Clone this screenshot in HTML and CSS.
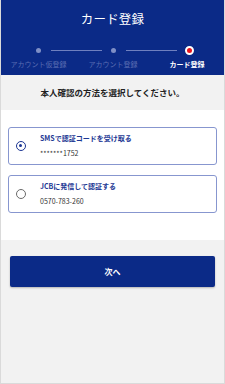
FILE: index.html
```html
<!DOCTYPE html>
<html lang="ja">
<head>
<meta charset="utf-8">
<title>カード登録</title>
<link rel="stylesheet" href="styles.css">
</head>
<body>
<div class="page">
  <header class="header">
    <h1 class="title">カード登録</h1>
    <div class="track">
      <span class="dot"></span>
      <span class="line line-a"></span>
      <span class="dot"></span>
      <span class="line line-b"></span>
      <span class="dot-current"></span>
    </div>
    <div class="labels">
      <span class="label">アカウント仮登録</span>
      <span class="label">アカウント登録</span>
      <span class="label label-current">カード登録</span>
    </div>
  </header>
  <div class="lead">本人確認の方法を選択してください。</div>
  <section class="options">
    <label class="option">
      <span class="radio radio-on"></span>
      <span class="option-text">
        <span class="option-title">SMSで認証コードを受け取る</span>
        <span class="option-sub">*******1752</span>
      </span>
    </label>
    <label class="option">
      <span class="radio"></span>
      <span class="option-text">
        <span class="option-title">JCBに発信して認証する</span>
        <span class="option-sub">0570-783-260</span>
      </span>
    </label>
  </section>
  <div class="actions">
    <button class="next">次へ</button>
  </div>
</div>
</body>
</html>
```
FILE: styles.css
```css
html, body {
  margin: 0;
  padding: 0;
}
body {
  background: #f2f2f2;
  font-family: "Noto Sans CJK JP", "Noto Sans", sans-serif;
  color: #333;
}
.page {
  box-sizing: border-box;
  width: 225px;
  min-height: 384px;
  border: 1px solid #dadada;
  border-top: 0;
  background: #f2f2f2;
}
.header {
  background: #0b2a87;
  height: 75px;
  box-sizing: border-box;
  padding-top: 9px;
}
.title {
  margin: 0;
  font-size: 12.5px;
  line-height: 20px;
  font-weight: 400;
  color: #fff;
  text-align: center;
  letter-spacing: 0.2px;
}
.track {
  display: flex;
  align-items: center;
  height: 10px;
  margin-top: 16px;
  padding-left: 35px;
}
.dot {
  width: 5px;
  height: 5px;
  border-radius: 50%;
  background: #7f8fc6;
  flex: none;
}
.line {
  height: 1px;
  background: #6f80bf;
  flex: none;
}
.line-a {
  width: 51px;
  margin: 0 9px 0 10px;
}
.line-b {
  width: 51px;
  margin: 0 8px 0 10px;
}
.dot-current {
  width: 5px;
  height: 5px;
  border-radius: 50%;
  background: #e8141c;
  border: 2px solid #fff;
  flex: none;
}
.labels {
  display: grid;
  grid-template-columns: 75px 74px 74px;
  margin-top: 4px;
}
.label {
  font-size: 7px;
  line-height: 10px;
  text-align: center;
  color: #5a6db2;
  white-space: nowrap;
}
.label-current {
  color: #fff;
  font-weight: 700;
}
.lead {
  height: 35px;
  display: flex;
  align-items: center;
  justify-content: center;
  font-size: 8.5px;
  font-weight: 700;
  color: #222;
  padding-bottom: 2px;
  box-sizing: border-box;
}
.options {
  background: #fff;
  padding: 17px 7px 27px;
  display: flex;
  flex-direction: column;
  gap: 10px;
}
.option {
  display: flex;
  align-items: center;
  height: 38px;
  box-sizing: border-box;
  border: 1px solid #8796cf;
  border-radius: 3px;
  padding-left: 7px;
  background: #fff;
}
.radio {
  width: 10px;
  height: 10px;
  box-sizing: border-box;
  border-radius: 50%;
  border: 1.3px solid #6a6a6a;
  flex: none;
  position: relative;
}
.radio-on {
  border: 1.6px solid #1b3593;
}
.radio-on::after {
  content: "";
  position: absolute;
  left: 1.6px;
  top: 1.6px;
  width: 3.6px;
  height: 3.6px;
  border-radius: 50%;
  background: #1b3593;
}
.option-text {
  display: flex;
  flex-direction: column;
  margin-left: 14px;
  gap: 5px;
  padding-bottom: 1px;
}
.option-title {
  font-size: 7px;
  line-height: 10px;
  font-weight: 700;
  color: #1d3894;
}
.option-sub {
  font-size: 7px;
  line-height: 10px;
  color: #333;
}
.actions {
  padding: 16px 9px 0;
}
.next {
  display: block;
  width: 100%;
  height: 31px;
  border: 0;
  border-radius: 2px;
  background: #0b2a87;
  color: #fff;
  font-family: "Noto Sans CJK JP", "Noto Sans", sans-serif;
  font-size: 8px;
  font-weight: 700;
  box-shadow: 0 1px 2px rgba(0,0,0,0.25);
  padding: 0;
}
```
